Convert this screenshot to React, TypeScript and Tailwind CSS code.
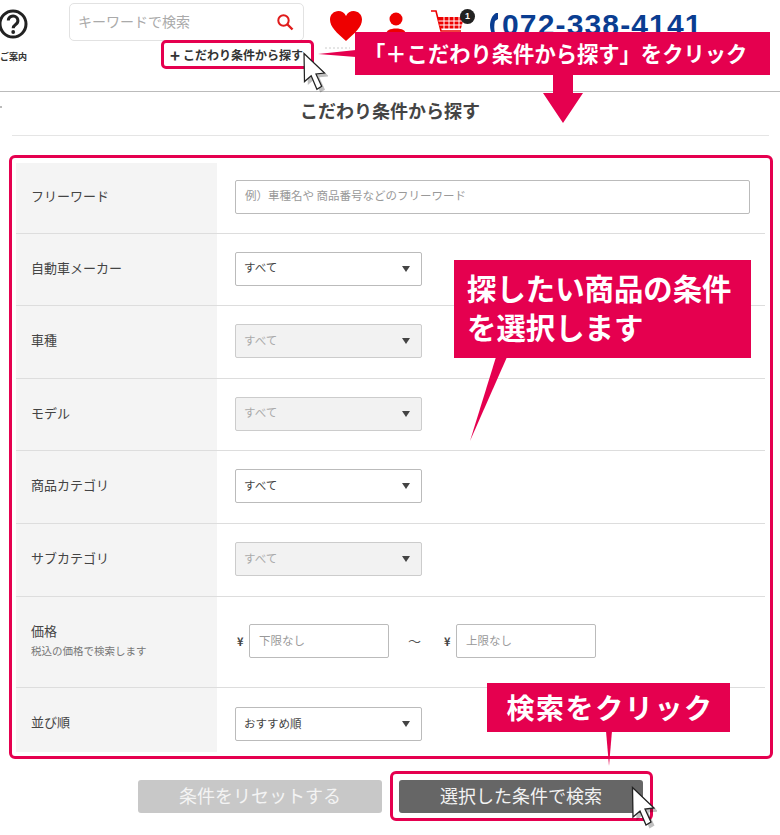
const JP = 'font-["Noto_Sans_CJK_JP","Noto_Sans",sans-serif]';

function Cursor({ className }: { className: string }) {
  return (
    <svg viewBox="0 0 26 44" className={className}>
      <path d="M3 3 L4 33 L11 27 L17 41 L22 38 L16 25 L26 24 Z" fill="#000" opacity="0.25" transform="translate(1.5 1.5)" />
      <path d="M1.5 1.5 L2 31 L9 25 L15 39 L20 36 L14 23 L23 22 Z" fill="#fff" stroke="#222" strokeWidth="1.3" strokeLinejoin="miter" />
    </svg>
  );
}

function SelectBox({ value, disabled }: { value: string; disabled?: boolean }) {
  return (
    <div
      className={`flex items-center justify-between w-[187px] h-[34px] rounded-[2px] border pl-[8px] pr-[11px] text-[11.5px] ${
        disabled ? 'bg-[#f2f2f2] text-[#aaaaaa] border-[#cccccc]' : 'bg-white text-[#444444] border-[#bbbbbb]'
      }`}
    >
      <span className="mt-[-1px]">{value}</span>
      <span className="w-0 h-0 border-x-[4px] border-x-transparent border-t-[6px] border-t-[#444444]" />
    </div>
  );
}

function PriceInput({ placeholder }: { placeholder: string }) {
  return (
    <div className="flex items-center">
      <span className="w-[14px] pl-[2px] text-[11px] font-bold text-[#444444]">¥</span>
      <div className="flex items-center w-[140px] h-[34px] rounded-[2px] border border-[#bbbbbb] pl-[9px] text-[11.5px] text-[#999999]">
        {placeholder}
      </div>
    </div>
  );
}

function Row({
  label,
  sub,
  height,
  children,
  last,
}: {
  label: string;
  sub?: string;
  height: string;
  children: React.ReactNode;
  last?: boolean;
}) {
  return (
    <div className={`flex ${height} ${last ? '' : 'border-b border-[#dddddd]'}`}>
      <div className={`w-[201px] shrink-0 bg-[#f4f4f4] pl-[15px] flex flex-col justify-center ${last ? 'pt-[4px]' : 'pb-[4px]'}`}>
        <div className="text-[13px] text-[#444444]">{label}</div>
        {sub && <div className="text-[10.5px] text-[#777777] mt-[3px]">{sub}</div>}
      </div>
      <div className={`flex-1 flex items-center pl-[18px] ${last ? 'pt-[8px]' : 'pb-[2px]'}`}>{children}</div>
    </div>
  );
}

export default function App() {
  return (
    <div className={`relative w-[780px] h-[835px] overflow-hidden bg-white ${JP}`}>
      {/* header */}
      <header className="flex h-[92px] border-b border-[#bbbbbb]">
        <div className="w-[69px] shrink-0 pt-[9px] relative">
          <svg viewBox="0 0 30 30" className="w-[30px] h-[30px] ml-[-2px]">
            <circle cx="15" cy="15" r="13" fill="none" stroke="#222" strokeWidth="3" />
            <path d="M10.3 11.5 a4.8 4.6 0 1 1 7.6 3.8 c-1.9 1.4 -2.7 2.2 -2.7 4" fill="none" stroke="#222" strokeWidth="3" />
            <circle cx="15.2" cy="23" r="1.9" fill="#222" />
          </svg>
          <div className="mt-[11px] text-[9px] font-bold text-[#333333] whitespace-nowrap">ご案内</div>
        </div>
        <div className="w-[245px] shrink-0 pt-[3px]">
          <div className="flex items-center justify-between w-[235px] h-[38px] rounded-[5px] border border-[#e2e2e2] pl-[8px] pr-[9px] text-[14px] text-[#aaaaaa]">
            <span className="mt-[-2px]">キーワードで検索</span>
            <svg viewBox="0 0 18 18" className="w-[18px] h-[18px]">
              <circle cx="7.5" cy="7.5" r="5.2" fill="none" stroke="#e01b1b" strokeWidth="2" />
              <path d="M11.5 11.5 L16.5 16.5" stroke="#e01b1b" strokeWidth="2.4" />
            </svg>
          </div>
          <div className="flex items-center ml-[92px] mt-[-1px] w-[153px] h-[29px] rounded-[5px] border-[3px] border-[#e5004f] bg-white pl-[6px] text-[12px] font-bold text-[#333333] whitespace-nowrap">
            <span className="text-[17px] font-bold w-[13px] leading-none">+</span>
            <span>こだわり条件から探す</span>
          </div>
        </div>
        <div className="flex items-start pt-[10px]">
          <svg viewBox="0 0 34 32" className="ml-[15px] w-[34px] h-[32px]">
            <path d="M17 31 C8 23 1 17 1 9.5 C1 4.5 5 1 9.5 1 C12.6 1 15.5 2.8 17 6 C18.5 2.8 21.4 1 24.5 1 C29 1 33 4.5 33 9.5 C33 17 26 23 17 31 Z" fill="#ee0000" />
          </svg>
          <svg viewBox="0 0 22 24" className="ml-[22px] mt-[2px] w-[22px] h-[24px]">
            <circle cx="11" cy="7" r="6.5" fill="#ee0000" />
            <path d="M1 22.5 C1 18.5 5 16.5 11 16.5 C17 16.5 21 18.5 21 22.5 Z" fill="#ee0000" />
          </svg>
          <div className="relative ml-[23px] w-[37px] h-[30px]">
            <svg viewBox="0 0 37 30" className="w-[37px] h-[30px]">
              <path d="M1 1 H6 L11 21 H31" fill="none" stroke="#ee0000" strokeWidth="1.6" />
              <path d="M7.5 7 H34 L31 18.5 H10.5 Z" fill="#ee0000" />
              <path d="M8.5 11 H33 M9.5 15 H32 M14 7 V19 M19 7 V19 M24 7 V19 M29 7 V19" stroke="#fff" strokeWidth="1" />
              <circle cx="13" cy="26" r="2.4" fill="#ee0000" />
              <circle cx="28" cy="26" r="2.4" fill="#ee0000" />
            </svg>
            <span className="absolute left-[30px] top-[-1px] flex items-center justify-center w-[15px] h-[15px] rounded-full bg-[#222222] text-white text-[9px] font-bold font-['Liberation_Sans',sans-serif]">
              1
            </span>
          </div>
          <svg viewBox="0 0 10 24" className="ml-[22px] mt-[2px] w-[10px] h-[24px]">
            <path d="M7 1 C3 3 1 9 1 13 C1 17 2 21 4 23 L6 21 C5 17 5 13 6 9 L9 7 L9 1 Z" fill="#0a3d91" />
          </svg>
          <span className="ml-[3px] text-[30px] leading-[30px] font-bold text-[#0a3d91] font-['Liberation_Sans',sans-serif] tracking-[1.15px] whitespace-nowrap">
            072-338-4141
          </span>
        </div>
      </header>

      {/* title */}
      <div className="mx-[12px] w-[757px] h-[44px] border-b border-[#e5e5e5] flex items-center justify-center pr-[1px] pb-[6px]">
        <h2 className="text-[18px] font-bold text-[#444444]">こだわり条件から探す</h2>
      </div>

      {/* form */}
      <div className="mx-[9px] mt-[19px] w-[764px] h-[604px] rounded-[6px] border-[3px] border-[#e5004f] pt-[5px] pl-[4px] pr-[5px]">
        <Row label="フリーワード" height="h-[71px]">
          <div className="flex items-center w-[515px] h-[34px] rounded-[2px] border border-[#bbbbbb] pl-[9px] pb-[2px] text-[11.5px] text-[#999999]">
            例）車種名や 商品番号などのフリーワード
          </div>
        </Row>
        <Row label="自動車メーカー" height="h-[72px]">
          <SelectBox value="すべて" />
        </Row>
        <Row label="車種" height="h-[73px]">
          <SelectBox value="すべて" disabled />
        </Row>
        <Row label="モデル" height="h-[72px]">
          <SelectBox value="すべて" disabled />
        </Row>
        <Row label="商品カテゴリ" height="h-[73px]">
          <SelectBox value="すべて" />
        </Row>
        <Row label="サブカテゴリ" height="h-[73px]">
          <SelectBox value="すべて" disabled />
        </Row>
        <Row label="価格" sub="税込の価格で検索します" height="h-[91px]">
          <PriceInput placeholder="下限なし" />
          <span className="w-[53px] pl-[19px] text-[13px] text-[#555555]">～</span>
          <PriceInput placeholder="上限なし" />
        </Row>
        <Row label="並び順" height="h-[64px]" last>
          <SelectBox value="おすすめ順" />
        </Row>
      </div>

      {/* buttons */}
      <div className="flex ml-[138px] mt-[21px] gap-[17px]">
        <div className="flex items-center justify-center w-[244px] h-[33px] rounded-[3px] bg-[#c8c8c8] pb-[2px] text-[18px] text-[#f4f4f4]">
          条件をリセットする
        </div>
        <div className="flex items-center justify-center w-[244px] h-[33px] rounded-[3px] bg-[#666666] pb-[2px] text-[18px] text-[#f2f2f2]">
          選択した条件で検索
        </div>
      </div>

      {/* annotations */}
      <div className="absolute left-[390px] top-[771px] w-[263px] h-[50px] rounded-[6px] border-[3px] border-[#e5004f]" />

      <svg viewBox="0 0 780 835" className="absolute inset-0 w-[780px] h-[835px] pointer-events-none">
        <path d="M318 54 L356 50 L356 57 Z" fill="#e5004f" />
        <path d="M553 75 H573 V93 H583 L563 123 L543 93 H553 Z" fill="#e5004f" />
        <path d="M496 357 H507 L470 441 Z" fill="#e5004f" />
        <path d="M606 731 H612 L609 766 Z" fill="#e5004f" />
        <path d="M325 48 H350" stroke="#cccccc" strokeWidth="1" strokeDasharray="2 2" />
        <path d="M0 107 H2" stroke="#bbbbbb" strokeWidth="2" />
      </svg>

      <div className="absolute left-[355px] top-[32px] w-[415px] h-[43px] bg-[#e5004f] flex items-center pl-[9px] pb-[2px] text-[21.3px] font-bold text-white whitespace-nowrap">
        「＋こだわり条件から探す」をクリック
      </div>
      <div className="absolute left-[454px] top-[260px] w-[297px] h-[98px] bg-[#e5004f] pl-[13px] pt-[8px] text-[29.4px] leading-[39px] font-bold text-white">
        <div>探したい商品の条件</div>
        <div>を選択します</div>
      </div>
      <div className="absolute left-[487px] top-[683px] w-[243px] h-[49px] bg-[#e5004f] flex items-center justify-center pl-[3px] pb-[2px] text-[28px] tracking-[1.6px] font-bold text-white">
        検索をクリック
      </div>

      <Cursor className="absolute left-[302px] top-[52px] w-[26px] h-[42px]" />
      <Cursor className="absolute left-[631px] top-[786px] w-[26px] h-[44px]" />
    </div>
  );
}
